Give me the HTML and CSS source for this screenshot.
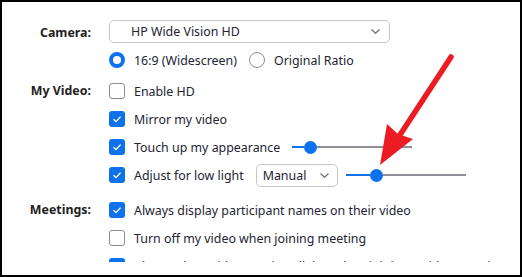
FILE: index.html
```html
<!DOCTYPE html>
<html lang="en">
<head>
    <meta charset="UTF-8">
    <title>Video Settings</title>
    <link rel="stylesheet" href="styles.css">
</head>
<body>
    <div class="frame">
        <div class="viewport">
            <div class="section camera">
                <div class="label camera-label">Camera:</div>
                <div class="controls">
                    <div class="row row-select">
                        <div class="select select-wide">
                            <span>HP Wide Vision HD</span>
                            <svg class="chevron" width="9" height="5" viewBox="0 0 9 5"><path d="M0.5 0.5 L4.5 4.3 L8.5 0.5" fill="none" stroke="#6e6e7e" stroke-width="1.2"/></svg>
                        </div>
                    </div>
                    <div class="row">
                        <span class="radio on"></span><span class="text">16:9 (Widescreen)</span>
                        <span class="radio second"></span><span class="text">Original Ratio</span>
                    </div>
                </div>
            </div>

            <div class="section video">
                <div class="label">My Video:</div>
                <div class="controls">
                    <div class="row"><span class="check"></span><span class="text">Enable HD</span></div>
                    <div class="row"><span class="check on"></span><span class="text">Mirror my video</span></div>
                    <div class="row">
                        <span class="check on"></span><span class="text">Touch up my appearance</span>
                        <div class="slider slider-touch">
                            <span class="fill" style="width: 12px"></span><span class="knob"></span><span class="track"></span>
                        </div>
                    </div>
                    <div class="row">
                        <span class="check on"></span><span class="text">Adjust for low light</span>
                        <div class="select select-small">
                            <span>Manual</span>
                            <svg class="chevron" width="9" height="5" viewBox="0 0 9 5"><path d="M0.5 0.5 L4.5 4.3 L8.5 0.5" fill="none" stroke="#6e6e7e" stroke-width="1.2"/></svg>
                        </div>
                        <div class="slider slider-light">
                            <span class="fill" style="width: 24px"></span><span class="knob"></span><span class="track"></span>
                        </div>
                    </div>
                </div>
            </div>

            <div class="section meetings">
                <div class="label">Meetings:</div>
                <div class="controls">
                    <div class="row"><span class="check on"></span><span class="text">Always display participant names on their video</span></div>
                    <div class="row"><span class="check"></span><span class="text">Turn off my video when joining meeting</span></div>
                    <div class="row"><span class="check on"></span><span class="text">Always show video preview dialog when joining a video meeting</span></div>
                </div>
            </div>
        </div>

        <!-- red pointer drawn over the settings -->
        <svg class="pointer" width="522" height="277" viewBox="0 0 522 277">
            <line x1="451" y1="57" x2="396" y2="141" stroke="#ec1c24" stroke-width="5.5" stroke-linecap="round"/>
            <path d="M380 165 L387 124 L398 134 L413 139 Z" fill="#ec1c24"/>
        </svg>
    </div>
</body>
</html>
```

FILE: styles.css
```css
body {
    margin: 0;
    padding: 0;
    background-color: #fff;
    font-family: 'Noto Sans', 'Open Sans', sans-serif;
    font-size: 12.4px;
    color: #232333;
}
.frame {
    position: relative;
    width: 522px;
    height: 277px;
    box-sizing: border-box;
    border: 2px solid #000;
    background-color: #fff;
    overflow: hidden;
}
.viewport {
    height: 260px;
    overflow: hidden;
    padding-top: 14px;
    box-sizing: border-box;
}
.section {
    display: flex;
}
.video {
    margin-top: 3px;
}
.meetings {
    margin-top: 7px;
}
.label {
    width: 89px;
    flex-shrink: 0;
    text-align: right;
    font-weight: bold;
    line-height: 28px;
    color: #222;
}
.camera-label {
    padding-top: 3px;
}
.controls {
    margin-left: 18px;
    flex: 1;
}
.row {
    display: flex;
    align-items: center;
    height: 28px;
    white-space: nowrap;
}
.row-select {
    height: 30px;
}
.text {
    margin-left: 9px;
}
.check {
    width: 14px;
    height: 14px;
    border: 1px solid #8c8c96;
    border-radius: 3px;
    flex-shrink: 0;
    background-color: #fff;
}
.check.on {
    width: 16px;
    height: 16px;
    border: none;
    background-color: #0e72ed;
    background-image: url("data:image/svg+xml,%3Csvg xmlns='http://www.w3.org/2000/svg' width='16' height='16'%3E%3Cpath d='M4.5 8.2 L7 10.6 L11.6 5.6' fill='none' stroke='%23fff' stroke-width='1.4'/%3E%3C/svg%3E");
}
.radio {
    width: 14px;
    height: 14px;
    border: 1px solid #8c8c96;
    border-radius: 50%;
    flex-shrink: 0;
    box-sizing: content-box;
}
.radio.on {
    width: 8px;
    height: 8px;
    border: 4px solid #0e72ed;
}
.radio.second {
    margin-left: 12px;
}
.select {
    display: flex;
    align-items: center;
    justify-content: space-between;
    box-sizing: border-box;
    border: 1px solid #c4c4cc;
    border-radius: 5px;
    background-color: #fff;
}
.select-wide {
    width: 281px;
    height: 23px;
    padding: 0 9px 0 21px;
}
.select-small {
    width: 82px;
    height: 23px;
    padding: 0 8px 0 6px;
    margin-left: 12px;
}
.chevron {
    display: block;
}
.slider {
    display: flex;
    align-items: center;
    width: 120px;
}
.slider-touch {
    margin-left: 12px;
}
.slider-light {
    margin-left: 8px;
}
.fill {
    height: 2px;
    background-color: #0e72ed;
}
.knob {
    width: 13px;
    height: 13px;
    border-radius: 50%;
    background-color: #0e72ed;
    flex-shrink: 0;
}
.track {
    flex: 1;
    height: 2px;
    background-color: #8f8f9a;
}
.pointer {
    position: absolute;
    left: -2px;
    top: -2px;
}
```
